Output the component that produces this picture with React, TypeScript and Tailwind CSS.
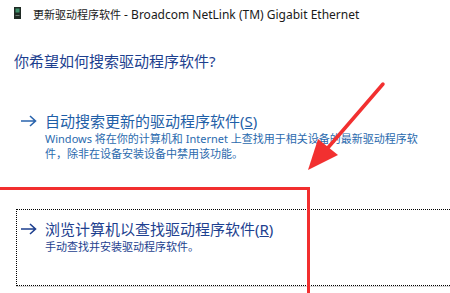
const font = { fontFamily: '"Noto Sans", "Noto Sans CJK SC", sans-serif' };

function ArrowIcon({ color }: { color: string }) {
    return (
        <svg width="17" height="12" viewBox="0 0 17 12" className="shrink-0">
            <path d="M1 6 H15.5 M10 1 L15.5 6 L10 11" fill="none" stroke={color} strokeWidth="1.6" />
        </svg>
    );
}

function DeviceIcon() {
    return (
        <svg width="7" height="12" viewBox="0 0 7 12" className="shrink-0">
            <rect x="0" y="0" width="7" height="12" fill="#1f2a24" />
            <rect x="1.5" y="1.5" width="4" height="4" fill="#3f8f6a" />
            <rect x="1.5" y="8" width="4" height="1" fill="#6b7c72" />
        </svg>
    );
}

export default function App() {
    return (
        <div className="relative w-[450px] h-[293px] overflow-hidden bg-white" style={font}>
            {/* title bar */}
            <div className="flex items-center h-[26px] pl-[14px] gap-[12px] text-[#1a1a1a]">
                <DeviceIcon />
                <span className="whitespace-nowrap">
                    <span className="text-[11px]">更新驱动程序软件</span>
                    <span className="text-[12px]"> - Broadcom NetLink (TM) Gigabit Ethernet</span>
                </span>
            </div>

            <div className="mt-[25px] pl-[14px] text-[15px] leading-[20px] text-[#1d3f8f]">
                你希望如何搜索驱动程序软件?
            </div>

            {/* option 1 */}
            <div className="mt-[40px] flex pl-[20px] gap-[8px]">
                <div className="h-[20px] flex items-center"><ArrowIcon color="#2a64ad" /></div>
                <div className="flex flex-col">
                    <div className="text-[15px] leading-[20px] text-[#1f5fa8]">
                        自动搜索更新的驱动程序软件(<span className="underline">S</span>)
                    </div>
                    <div className="text-[11px] leading-[15px] text-[#2a6aae] whitespace-nowrap">
                        Windows 将在你的计算机和 Internet 上查找用于相关设备的最新驱动程序软<br />
                        件，除非在设备安装设备中禁用该功能。
                    </div>
                </div>
            </div>

            {/* option 2, focused */}
            <div className="ml-[16px] mt-[48px] w-[460px] h-[77px] border border-dotted border-black shadow-[0_1px_0_#d8d8d8]">
                <div className="flex pl-[3px] pt-[9px] gap-[8px]">
                    <div className="h-[20px] flex items-center"><ArrowIcon color="#1d3f8f" /></div>
                    <div className="flex flex-col">
                        <div className="text-[15px] leading-[20px] text-[#1d3f8f]">
                            浏览计算机以查找驱动程序软件(<span className="underline">R</span>)
                        </div>
                        <div className="text-[11px] leading-[15px] text-[#1d3f8f]">
                            手动查找并安装驱动程序软件。
                        </div>
                    </div>
                </div>
            </div>

            {/* red annotation: box */}
            <div className="absolute left-0 top-[187px] w-[310px] h-[120px] border-t-[3px] border-r-[3px] border-[#f22f2f]" />

            {/* red annotation: arrow */}
            <svg className="absolute left-0 top-0" width="450" height="293" viewBox="0 0 450 293">
                <path d="M383 84 L326 150" stroke="#f23030" strokeWidth="3.5" strokeLinecap="round" fill="none" />
                <path d="M308 170 L318 139 L338 155 Z" fill="#f23030" />
            </svg>
        </div>
    );
}
